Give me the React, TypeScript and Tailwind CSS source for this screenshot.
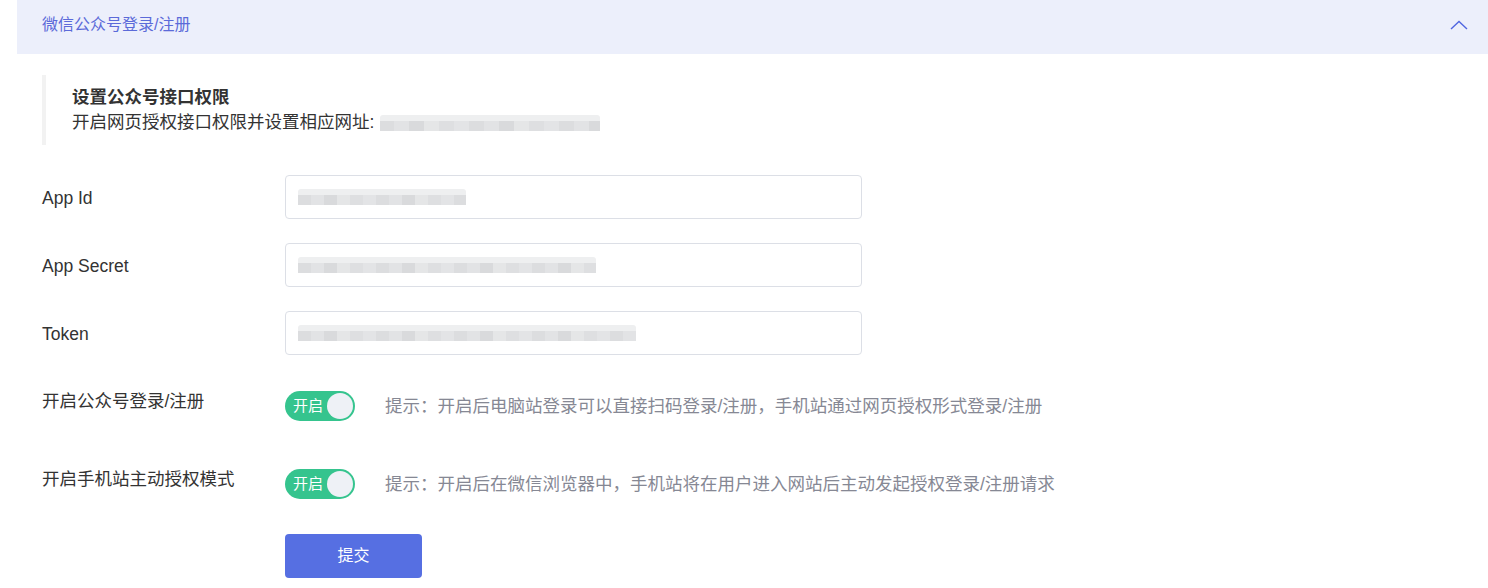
import React from "react";

const Blur = ({ widths }: { widths: number[] }) => {
  const shades = ["bg-[#dcdddf]", "bg-[#e2e3e5]", "bg-[#d9dadc]", "bg-[#e5e6e7]", "bg-[#dedfe1]", "bg-[#e3e4e6]"];
  return (
    <div className="flex flex-col">
      <div className="h-[6px] flex rounded-t-[3px] overflow-hidden">
        {widths.map((w, i) => (
          <div key={"t" + i} style={{ width: w }} className="bg-[#eeeff0]" />
        ))}
      </div>
      <div className="h-[10px] flex">
        {widths.map((w, i) => (
          <div key={"b" + i} style={{ width: w }} className={shades[i % shades.length]} />
        ))}
      </div>
    </div>
  );
};

const FieldRow = ({ label, widths, last }: { label: string; widths: number[]; last?: boolean }) => (
  <div className={`flex items-center ${last ? "" : "mb-[24px]"}`}>
    <div className="w-[243px] text-[17.5px] text-[#333] pt-[2px]">{label}</div>
    <div className="w-[577px] h-[44px] border border-[#dcdfe6] rounded-[4px] bg-white flex items-center px-[12px]">
      <Blur widths={widths} />
    </div>
  </div>
);

const SwitchRow = ({ label, hint }: { label: string; hint: string }) => (
  <div className="flex items-start">
    <div className="w-[243px] text-[17.5px] leading-6 text-[#333] -mt-[2px]">{label}</div>
    <div className="flex items-center">
      <div className="w-[70px] h-[30px] rounded-full bg-[#35c48e] flex items-center justify-between pl-[8px] pr-[2px]">
        <span className="text-[15px] text-white">开启</span>
        <span className="w-[26px] h-[26px] rounded-full bg-[#eef1f6]" />
      </div>
      <div className="ml-[30px] text-[17.5px] text-[#868894]">{hint}</div>
    </div>
  </div>
);

export default function App() {
  return (
    <div
      className="w-[1488px] h-[588px] bg-white pl-[17px] overflow-hidden"
      style={{ fontFamily: '"Liberation Sans", "Noto Sans CJK SC", sans-serif' }}
    >
      <div className="h-[54px] bg-[#eceffb] flex items-center justify-between pl-[25px] pr-[20px]">
        <span className="text-[16px] text-[#5b6ad9] -mt-[4px]">微信公众号登录/注册</span>
        <svg width="18" height="10" viewBox="0 0 18 10" fill="none" className="-mt-[4px]">
          <path d="M1 9 L9 1.5 L17 9" stroke="#5066e0" strokeWidth="1.4" />
        </svg>
      </div>

      <div className="px-[25px]">
        <div className="mt-[21px] border-l-4 border-[#f2f2f2] pl-[26px] py-[10px]">
          <div className="text-[17.5px] leading-[25px] font-bold text-[#333]">设置公众号接口权限</div>
          <div className="flex items-center text-[17.5px] leading-[25px] text-[#333]">
            <span>开启网页授权接口权限并设置相应网址:</span>
            <div className="ml-[6px]">
              <Blur widths={[14, 15, 15, 15, 15, 15, 15, 15, 15, 15, 15, 15, 15, 15, 11]} />
            </div>
          </div>
        </div>

        <div className="mt-[30px]">
          <FieldRow label="App Id" widths={[13, 13, 13, 13, 13, 13, 13, 13, 13, 13, 13, 13, 12]} />
          <FieldRow label="App Secret" widths={[13, 13, 13, 13, 13, 13, 13, 13, 13, 13, 13, 13, 13, 13, 13, 13, 13, 13, 13, 13, 13, 13, 12]} />
          <FieldRow label="Token" widths={[13, 13, 13, 13, 13, 13, 13, 13, 13, 13, 13, 13, 13, 13, 13, 13, 13, 13, 13, 13, 13, 13, 13, 13, 13, 13]} last />
        </div>

        <div className="mt-[36px]">
          <SwitchRow label="开启公众号登录/注册" hint="提示：开启后电脑站登录可以直接扫码登录/注册，手机站通过网页授权形式登录/注册" />
        </div>
        <div className="mt-[48px]">
          <SwitchRow label="开启手机站主动授权模式" hint="提示：开启后在微信浏览器中，手机站将在用户进入网站后主动发起授权登录/注册请求" />
        </div>

        <div className="mt-[35px] pl-[243px]">
          <button className="w-[137px] h-[44px] rounded-[4px] bg-[#566fe2] text-white text-[16px]">提交</button>
        </div>
      </div>
    </div>
  );
}
